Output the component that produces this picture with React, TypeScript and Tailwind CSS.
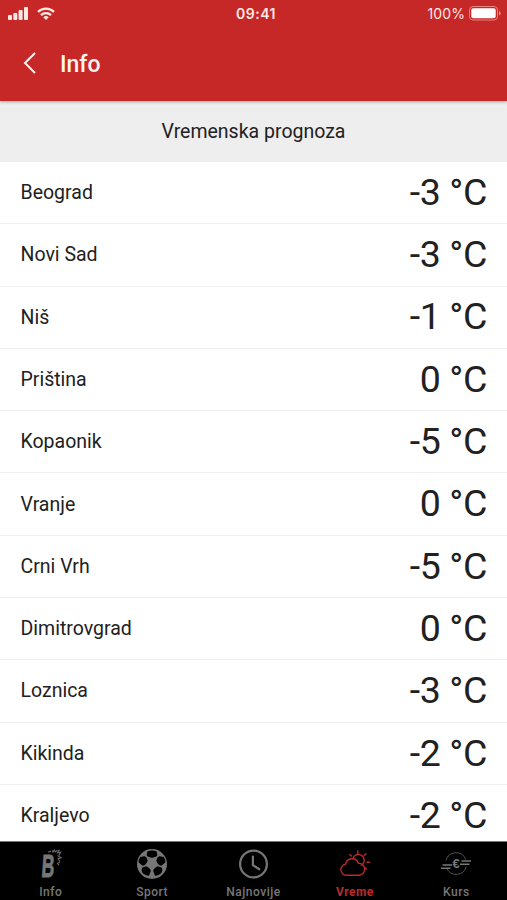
import type { ReactNode } from 'react'

const cities = [
  { name: 'Beograd', temp: -3 },
  { name: 'Novi Sad', temp: -3 },
  { name: 'Niš', temp: -1 },
  { name: 'Priština', temp: 0 },
  { name: 'Kopaonik', temp: -5 },
  { name: 'Vranje', temp: 0 },
  { name: 'Crni Vrh', temp: -5 },
  { name: 'Dimitrovgrad', temp: 0 },
  { name: 'Loznica', temp: -3 },
  { name: 'Kikinda', temp: -2 },
  { name: 'Kraljevo', temp: -2 },
]

function StatusBar() {
  return (
    <div className="grid grid-cols-3 items-center h-7 pl-2 pr-[6px] text-[#ffe9e6] font-['Inter',sans-serif]">
      <div className="flex items-center gap-[9px] -mt-[2px]">
        <svg width="20" height="13" viewBox="0 0 20 13" fill="currentColor">
          <rect x="0" y="8" width="4" height="5" rx="1" />
          <rect x="5.3" y="6" width="4" height="7" rx="1" />
          <rect x="10.6" y="3" width="4" height="10" rx="1" />
          <rect x="16" y="0" width="4" height="13" rx="1" />
        </svg>
        <svg width="18" height="13" viewBox="0 0 18 13" fill="none" stroke="currentColor" strokeWidth="2.3">
          <path d="M1 4.9a11.5 11.5 0 0 1 16 0" />
          <path d="M4 8.1a7.2 7.2 0 0 1 10 0" />
          <path d="M6.3 10.2a3.9 3.9 0 0 1 5.4 0L9 13z" fill="currentColor" stroke="none" />
        </svg>
      </div>
      <span className="pl-[3px] -mt-[2px] text-center text-[14px] font-semibold tracking-[0.5px]">09:41</span>
      <div className="flex items-center justify-end gap-1 -mt-[1px]">
        <span className="text-[14px] tracking-[0.1px]">100%</span>
        <svg width="32" height="15" viewBox="0 0 32 15">
          <rect x="0.5" y="0.5" width="28" height="13.5" rx="3.5" fill="none" stroke="#e58480" />
          <rect x="2.3" y="2.3" width="24.4" height="10" rx="2" fill="#fff" />
          <path d="M30 5v4.5q1.6-.8 1.6-2.25T30 5" fill="#f0a09c" />
        </svg>
      </div>
    </div>
  )
}

function LogoIcon() {
  return (
    <svg width="30" height="44" viewBox="0 0 30 44" fill="currentColor">
      <text
        fontFamily="Liberation Sans, sans-serif"
        fontWeight="700"
        fontSize="32"
        stroke="currentColor"
        strokeWidth="1"
        transform="translate(5 34.5) skewX(-4) scale(.55 1)"
      >
        B
      </text>
      <path
        d="M12 10l3-.7M16 8.5l1 1.6 1.3-2.2 1 2 2.2-1.7M23.5 7.7l-2 3 3.2-.4-1.7 2.8M21.5 13.5l3.8 2.3-3.2 1 1.8 2.7M24 20l-2.5 1.5 1.5 1.7"
        fill="none"
        stroke="currentColor"
        strokeWidth="1.2"
        opacity=".85"
      />
    </svg>
  )
}

function BallIcon() {
  return (
    <svg width="30" height="30" viewBox="0 0 30 30">
      <circle cx="15" cy="15" r="15" fill="currentColor" />
      <g fill="#000">
        <path d="M10.3 2.4q4.7-1.6 9.4 0l.6 3.6q-.3 2-5.3 2.8-5-.8-5.3-2.8z" />
        <path d="M3.2 8l4-.7q3.1.7 3.4 4.7-1.4 4.1-4.9 4.8l-4.1-3.4q-.3-2.6 1.6-5.4z" />
        <path d="M26.8 8l-4-.7q-3.1.7-3.4 4.7 1.4 4.1 4.9 4.8l4.1-3.4q.3-2.6-1.6-5.4z" />
        <path d="M5 18.7l4.2-1.5q4 1.6 4.6 4.7l-1.8 4.8q-3.1.4-6.2-2.4-1.8-2.6-.8-5.6z" />
        <path d="M25 18.7l-4.2-1.5q-4 1.6-4.6 4.7l1.8 4.8q3.1.4 6.2-2.4 1.8-2.6.8-5.6z" />
      </g>
    </svg>
  )
}

function ClockIcon() {
  return (
    <svg width="30" height="30" viewBox="0 0 30 30" fill="none" stroke="currentColor" strokeWidth="2.2">
      <circle cx="14.5" cy="15" r="13.4" />
      <path d="M13.9 7.5v8.7l6.4 4" strokeLinecap="round" />
    </svg>
  )
}

function WeatherIcon() {
  return (
    <svg width="32" height="28" viewBox="0 0 32 28" fill="none" stroke="currentColor" strokeWidth="1.4" strokeLinecap="round">
      <path d="M7.2 25.3a5.6 5.6 0 0 1-.7-11.1 6.6 6.6 0 0 1 12.8-.9 6 6 0 0 1 .8 12z" />
      <path d="M13.8 8.8a5.8 5.8 0 1 1 10 5.2l-1.6 1.2" />
      <path d="M18.8 1v2.5M10.8 4.4l1.6 1.5M27 3.7l-1.8 1.8M28 12.2h2.5M25.7 17.5l1.6 1.6" />
    </svg>
  )
}

function EuroIcon() {
  return (
    <svg width="30" height="24" viewBox="0 0 30 24" fill="none" stroke="currentColor">
      <path d="M5 8.5a10.4 10.4 0 0 1 19.8-1M25.2 14.8a10.4 10.4 0 0 1-19.5 1.4" strokeWidth=".9" opacity=".75" />
      <path d="M20.5 9H30M19 12.2h9.5M1.5 13h9.5M0 16.2h9.5" strokeWidth="1.6" />
      <text x="15" y="16.3" textAnchor="middle" fontFamily="Liberation Sans, sans-serif" fontWeight="700" fontSize="13" fill="currentColor" stroke="none">
        €
      </text>
    </svg>
  )
}

function Tab({ label, icon, active }: { label: string; icon: ReactNode; active?: boolean }) {
  return (
    <button className={`flex-1 flex flex-col items-center ${active ? 'text-[#b92a2b]' : 'text-[#777]'}`}>
      <span className="h-[43px] pt-px flex items-center justify-center">{icon}</span>
      <span className={`text-[12px] leading-[14px] tracking-[0.5px] ${active ? 'font-bold' : 'font-medium'}`}>{label}</span>
    </button>
  )
}

export default function App() {
  return (
    <div className="w-[507px] h-[900px] flex flex-col overflow-hidden bg-white text-[#212121] font-['Roboto',sans-serif]">
      <header className="h-[101px] shrink-0 relative bg-[#c62828] shadow-[0_1px_3px_rgba(0,0,0,0.3)]">
        <StatusBar />
        <div className="flex items-center h-[70px] pl-[23px] text-[#fff3f1]">
          <svg width="13" height="22" viewBox="0 0 13 22" fill="none" stroke="currentColor" strokeWidth="2">
            <path d="M12 1L2 11l10 10" />
          </svg>
          <h1 className="ml-[24px] mt-[4px] text-[23px] font-medium">Info</h1>
        </div>
      </header>
      <h2 className="h-[61px] shrink-0 flex items-center justify-center bg-[#eee] text-[19.5px]">Vremenska prognoza</h2>
      <ul className="flex-1 min-h-0 overflow-hidden">
        {cities.map((c) => (
          <li key={c.name} className="h-[62.3px] flex items-center justify-between pl-[20.5px] pr-[20px] border-b border-[#f0f0f0]">
            <span className="text-[19.5px]">{c.name}</span>
            <span className="text-[37.5px] leading-none tracking-[-0.4px]">{c.temp} °C</span>
          </li>
        ))}
      </ul>
      <nav className="h-[59px] shrink-0 flex bg-black border-t border-[#777]">
        <Tab label="Info" icon={<LogoIcon />} />
        <Tab label="Sport" icon={<BallIcon />} />
        <Tab label="Najnovije" icon={<ClockIcon />} />
        <Tab label="Vreme" icon={<WeatherIcon />} active />
        <Tab label="Kurs" icon={<EuroIcon />} />
      </nav>
    </div>
  )
}
